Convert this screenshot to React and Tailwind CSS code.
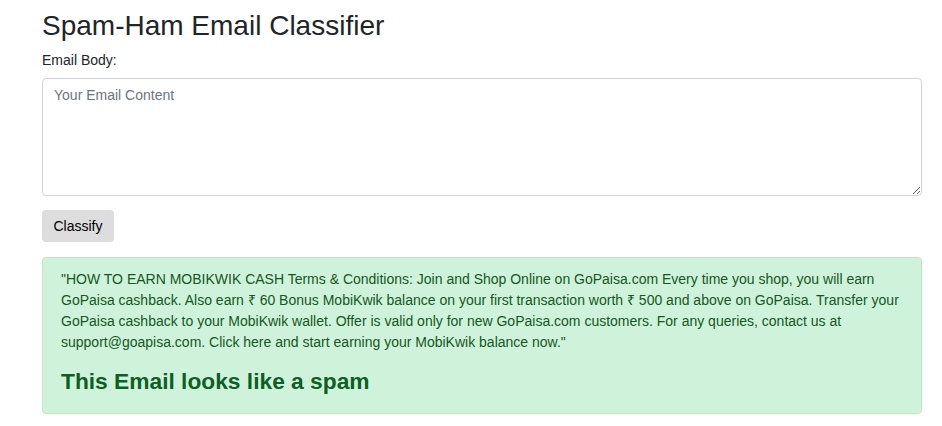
export default function App() {
  const email =
    '"HOW TO EARN MOBIKWIK CASH Terms & Conditions: Join and Shop Online on GoPaisa.com Every time you shop, you will earn GoPaisa cashback. Also earn ₹ 60 Bonus MobiKwik balance on your first transaction worth ₹ 500 and above on GoPaisa. Transfer your GoPaisa cashback to your MobiKwik wallet. Offer is valid only for new GoPaisa.com customers. For any queries, contact us at support@goapisa.com. Click here and start earning your MobiKwik balance now."';

  return (
    <div
      className="min-h-screen bg-white pl-[42px] pr-[20px] pt-[8px] text-[#212529]"
      style={{ fontFamily: '"Liberation Sans", Arial, sans-serif' }}
    >
      <h1 className="text-[28px] leading-[36px] font-normal">Spam-Ham Email Classifier</h1>
      <form className="mt-[6px]" onSubmit={(e) => e.preventDefault()}>
        <label className="block text-[14px] leading-[20px]">Email Body:</label>
        <textarea
          className="mt-[8px] block h-[118px] w-full rounded-[4px] border border-[#ced4da] px-[11px] py-[6px] text-[14px] leading-[20px] placeholder:text-[#6c757d] outline-none"
          placeholder="Your Email Content"
        />
        <button
          type="submit"
          className="mt-[14px] h-[32px] w-[72px] rounded-[4px] bg-[#dddddd] text-[14px] text-black"
        >
          Classify
        </button>
      </form>
      <div className="mt-[15px] rounded-[4px] border border-[#c3e6cb] bg-[#cff3da] px-[18px] pt-[11px] pb-[16px] text-[#155724]">
        <p className="text-[14px] leading-[21px]">{email}</p>
        <h2 className="mt-[12px] text-[22.75px] leading-[32px] font-bold text-[#0c5f25]">
          This Email looks like a spam
        </h2>
      </div>
    </div>
  );
}
